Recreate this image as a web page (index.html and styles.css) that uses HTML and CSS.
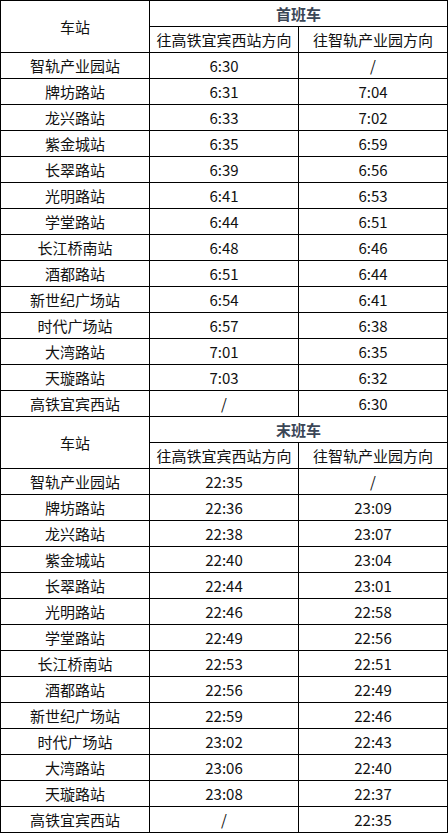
FILE: index.html
```html
<!DOCTYPE html>
<html lang="zh-CN">
<head>
<meta charset="utf-8">
<title>首末班车时刻表</title>
<link rel="stylesheet" href="styles.css">
</head>
<body>
<table class="timetable">
  <colgroup><col class="c1"><col class="c2"><col class="c3"></colgroup>
  <tbody>
    <tr><td rowspan="2">车站</td><td colspan="2" class="title">首班车</td></tr>
    <tr><td>往高铁宜宾西站方向</td><td>往智轨产业园方向</td></tr>
    <tr><td>智轨产业园站</td><td>6:30</td><td>/</td></tr>
    <tr><td>牌坊路站</td><td>6:31</td><td>7:04</td></tr>
    <tr><td>龙兴路站</td><td>6:33</td><td>7:02</td></tr>
    <tr><td>紫金城站</td><td>6:35</td><td>6:59</td></tr>
    <tr><td>长翠路站</td><td>6:39</td><td>6:56</td></tr>
    <tr><td>光明路站</td><td>6:41</td><td>6:53</td></tr>
    <tr><td>学堂路站</td><td>6:44</td><td>6:51</td></tr>
    <tr><td>长江桥南站</td><td>6:48</td><td>6:46</td></tr>
    <tr><td>酒都路站</td><td>6:51</td><td>6:44</td></tr>
    <tr><td>新世纪广场站</td><td>6:54</td><td>6:41</td></tr>
    <tr><td>时代广场站</td><td>6:57</td><td>6:38</td></tr>
    <tr><td>大湾路站</td><td>7:01</td><td>6:35</td></tr>
    <tr><td>天璇路站</td><td>7:03</td><td>6:32</td></tr>
    <tr><td>高铁宜宾西站</td><td>/</td><td>6:30</td></tr>
    <tr><td rowspan="2">车站</td><td colspan="2" class="title">末班车</td></tr>
    <tr><td>往高铁宜宾西站方向</td><td>往智轨产业园方向</td></tr>
    <tr><td>智轨产业园站</td><td>22:35</td><td>/</td></tr>
    <tr><td>牌坊路站</td><td>22:36</td><td>23:09</td></tr>
    <tr><td>龙兴路站</td><td>22:38</td><td>23:07</td></tr>
    <tr><td>紫金城站</td><td>22:40</td><td>23:04</td></tr>
    <tr><td>长翠路站</td><td>22:44</td><td>23:01</td></tr>
    <tr><td>光明路站</td><td>22:46</td><td>22:58</td></tr>
    <tr><td>学堂路站</td><td>22:49</td><td>22:56</td></tr>
    <tr><td>长江桥南站</td><td>22:53</td><td>22:51</td></tr>
    <tr><td>酒都路站</td><td>22:56</td><td>22:49</td></tr>
    <tr><td>新世纪广场站</td><td>22:59</td><td>22:46</td></tr>
    <tr><td>时代广场站</td><td>23:02</td><td>22:43</td></tr>
    <tr><td>大湾路站</td><td>23:06</td><td>22:40</td></tr>
    <tr><td>天璇路站</td><td>23:08</td><td>22:37</td></tr>
    <tr><td>高铁宜宾西站</td><td>/</td><td>22:35</td></tr>
  </tbody>
</table>
</body>
</html>
```
FILE: styles.css
```css
html, body {
  margin: 0;
  padding: 0;
  background: #ffffff;
}
.timetable {
  border-collapse: collapse;
  table-layout: fixed;
  width: 447px;
  font-family: "Noto Sans CJK SC", "Noto Sans", sans-serif;
  font-size: 15px;
  color: #111111;
}
.c1 { width: 149px; }
.c2 { width: 149px; }
.c3 { width: 149px; }
.timetable td {
  border: 1px solid #000;
  height: 25px;
  padding: 0;
  text-align: center;
  vertical-align: middle;
  line-height: 25px;
  white-space: nowrap;
}
.timetable td.title {
  font-weight: bold;
  color: #3b4656;
}
```
